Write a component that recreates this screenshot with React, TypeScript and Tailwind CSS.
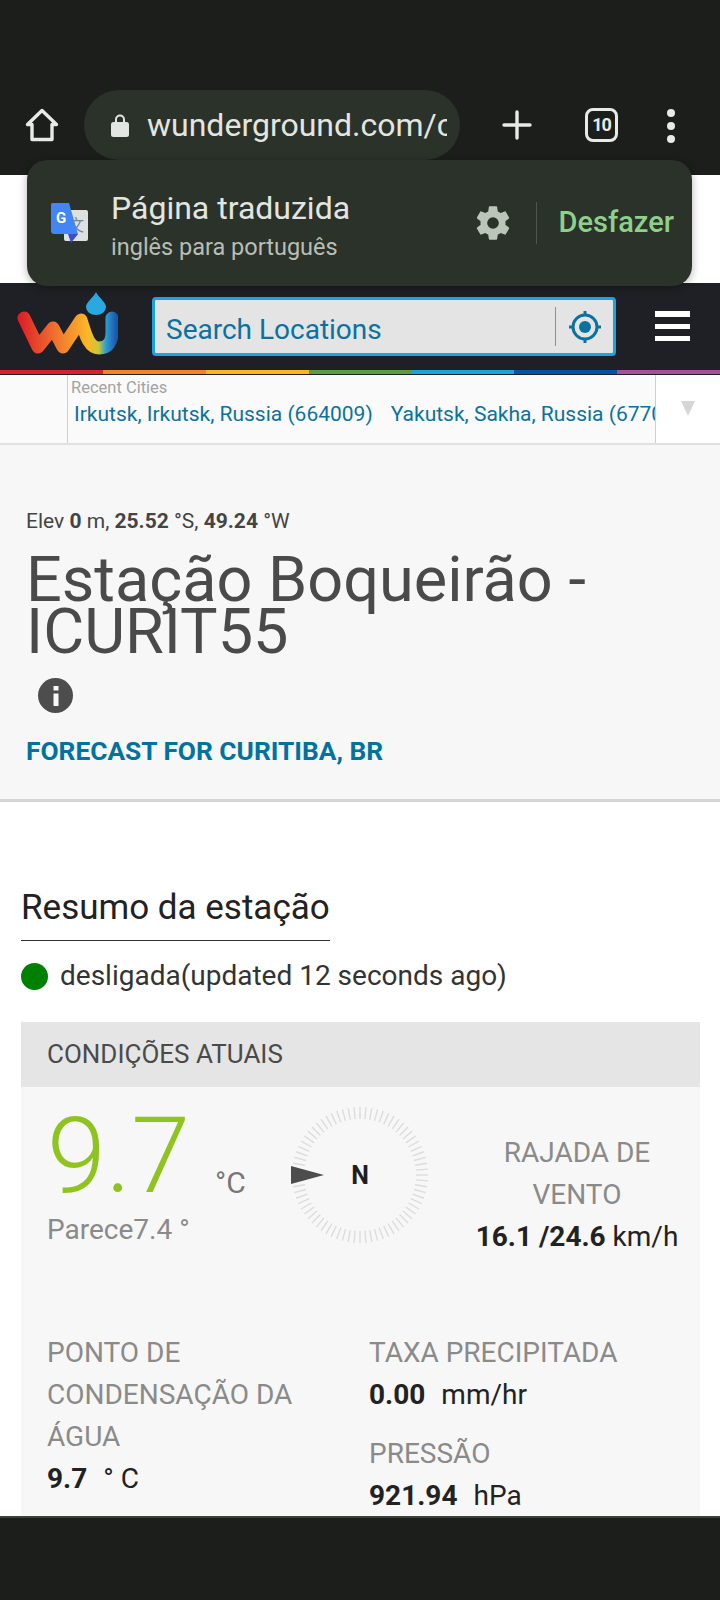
import React from 'react';

const rainbow = ['bg-[#d9202c]', 'bg-[#f58426]', 'bg-[#fdb522]', 'bg-[#5a9e3f]', 'bg-[#14a6dc]', 'bg-[#0353a8]', 'bg-[#a84f9c]'];

const ticks = Array.from({ length: 72 }, (_, i) => (i * 360) / 72);

const HomeIcon = () => (
  <svg width="36" height="36" viewBox="0 0 36 36" fill="none" stroke="#e8eae5" strokeWidth="3.4" strokeLinejoin="round">
    <path d="M18 3.5 3.5 17.5H8V32.5H28V17.5H32.5Z" />
  </svg>
);

const Logo = () => (
  <svg width="106" height="68" viewBox="0 0 106 68" className="shrink-0">
    <defs>
      <linearGradient id="wu" gradientUnits="userSpaceOnUse" x1="8" y1="0" x2="104" y2="0">
        <stop offset="0" stopColor="#dd2027" />
        <stop offset="0.38" stopColor="#f0742f" />
        <stop offset="0.7" stopColor="#fdb628" />
        <stop offset="0.82" stopColor="#c8c83a" />
        <stop offset="0.89" stopColor="#2f9fd0" />
        <stop offset="1" stopColor="#1a58ad" />
      </linearGradient>
    </defs>
    <path
      d="M12 26 26 55 41 36 51 55 69 28C73 40 76 56 87 56 96 56 100 50 100 40V26"
      fill="none"
      stroke="url(#wu)"
      strokeWidth="13"
      strokeLinecap="round"
      strokeLinejoin="round"
    />
    <path d="M84 0C87 6 94 10 94 15A10 8 0 0 1 74 15C74 10 81 6 84 0Z" fill="#29a9df" />
  </svg>
);

const TranslateIcon = () => (
  <svg width="38" height="40" viewBox="0 0 38 40">
    <rect x="14" y="7" width="24" height="31" rx="2" fill="#dfe1e0" />
    <text x="26" y="28" textAnchor="middle" fontSize="16" fill="#6f8797" fontFamily="'Noto Sans CJK SC', sans-serif">文</text>
    <path d="M2 0H19L28 31H4A3 3 0 0 1 1 28V1Z" fill="#4285f4" />
    <path d="M28 31 21 40 18 31Z" fill="#3a4fc4" />
    <text x="11" y="20" textAnchor="middle" fontSize="15" fontWeight="700" fill="#fff" fontFamily="Roboto, sans-serif">G</text>
  </svg>
);

const GearIcon = () => (
  <svg width="40" height="40" viewBox="0 0 24 24" fill="#bcc5ba">
    <path d="M19.430 12.980c.04-.32.07-.64.07-.98s-.03-.66-.07-.98l2.110-1.650c.19-.15.240-.42.120-.64l-2-3.460c-.12-.22-.39-.3-.61-.22l-2.490 1c-.52-.4-1.080-.73-1.690-.98l-.38-2.650A.49.49 0 0 0 14 2h-4c-.25 0-.46.18-.49.42l-.38 2.650c-.61.25-1.170.59-1.690.98l-2.490-1c-.23-.09-.49 0-.61.22l-2 3.460c-.13.22-.07.49.12.64l2.110 1.650c-.04.32-.07.65-.07.98s.03.66.07.98l-2.110 1.650c-.19.15-.24.42-.12.64l2 3.460c.12.22.39.3.61.22l2.490-1c.52.4 1.080.73 1.690.98l.38 2.650c.03.24.24.42.49.42h4c.25 0 .46-.18.49-.42l.38-2.650c.61-.25 1.170-.59 1.690-.98l2.490 1c.23.09.49 0 .61-.22l2-3.460c.12-.22.07-.49-.12-.64l-2.110-1.650zM12 15.500a3.500 3.500 0 1 1 0-7 3.500 3.500 0 0 1 0 7z" />
  </svg>
);

const Compass = () => (
  <svg width="140" height="140" viewBox="0 0 140 140" className="shrink-0">
    {ticks.map((a) => (
      <line key={a} x1="70" y1="2" x2="70" y2="14" stroke="#dcdcdc" strokeWidth="1.4" transform={`rotate(${a} 70 70)`} />
    ))}
    <path d="M1 61 34 70 1 79Z" fill="#4d4d4d" />
    <text x="70" y="79" textAnchor="middle" fontSize="25" fontWeight="700" fill="#1e1e1e" fontFamily="Roboto, sans-serif">N</text>
  </svg>
);

export default function App() {
  return (
    <div className="relative flex h-[1600px] w-[720px] flex-col overflow-hidden bg-white [font-family:Roboto,sans-serif]">
      {/* browser toolbar */}
      <div className="flex h-[175px] shrink-0 items-start bg-[#1b1e1b] pt-[90px]">
        <div className="ml-[24px] mt-[17px] w-[60px] shrink-0">
          <HomeIcon />
        </div>
        <div className="flex h-[70px] w-[376px] shrink-0 items-center rounded-full bg-[#2b322a] pl-[26px] pr-[13px]">
          <svg width="20" height="24" viewBox="0 0 20 24" className="shrink-0" fill="#e3e6e0">
            <path d="M5 10V6.500a5 5 0 0 1 10 0V10h-2V6.500a3 3 0 0 0-6 0V10Z" />
            <rect x="1" y="9" width="18" height="15" rx="2.500" />
          </svg>
          <span className="ml-[17px] overflow-hidden whitespace-nowrap text-[32px] leading-[70px] text-[#e3e6e0]">wunderground.com/c</span>
        </div>
        <svg width="32" height="32" viewBox="0 0 32 32" className="ml-[41px] mt-[19px] shrink-0" stroke="#e8eae5" strokeWidth="3.4" strokeLinecap="round">
          <path d="M16 3V29M3 16H29" />
        </svg>
        <div className="ml-[52px] mt-[18px] flex h-[34px] w-[33px] shrink-0 items-center justify-center rounded-[8px] border-[3px] border-[#e8eae5] text-[18px] font-bold leading-none tracking-[-1px] text-[#e8eae5]">
          10
        </div>
        <div className="ml-[49px] mt-[19px] flex shrink-0 flex-col gap-[5px]">
          <div className="h-[8px] w-[8px] rounded-full bg-[#e8eae5]" />
          <div className="h-[8px] w-[8px] rounded-full bg-[#e8eae5]" />
          <div className="h-[8px] w-[8px] rounded-full bg-[#e8eae5]" />
        </div>
      </div>

      {/* translation bubble */}
      <div className="absolute left-[27px] top-[160px] flex h-[126px] w-[665px] items-center rounded-[20px] bg-[#2b322a] shadow-[0_2px_8px_rgba(0,0,0,0.3)]">
        <div className="ml-[23px] shrink-0">
          <TranslateIcon />
        </div>
        <div className="ml-[23px] flex flex-col pt-[8px]">
          <span className="text-[32px] leading-[38px] text-[#e3e6e0]">Página traduzida</span>
          <span className="mt-[2px] text-[23.500px] leading-[36px] text-[#b9beb6]">inglês para português</span>
        </div>
        <div className="ml-auto shrink-0">
          <GearIcon />
        </div>
        <div className="ml-[23px] h-[42px] w-[1px] shrink-0 bg-[#4c544b]" />
        <span className="ml-[22px] mr-[18px] text-[29px] font-medium text-[#8ed08a]">Desfazer</span>
      </div>

      <div className="h-[108px] shrink-0 bg-white" />

      {/* site nav */}
      <div className="flex h-[87px] shrink-0 items-start bg-[#1f2025]">
        <div className="ml-[12px] mt-[9px] w-[140px] shrink-0">
          <Logo />
        </div>
        <div className="mt-[14px] flex h-[59px] w-[464px] shrink-0 items-center rounded-[4px] border-[3px] border-[#1ba5dc] bg-[#e4e4e4]">
          <span className="ml-[11px] flex-1 pt-[6px] text-[28px] text-[#0b729f]">Search Locations</span>
          <div className="h-[39px] w-[1px] bg-[#8f8f8f]" />
          <svg width="34" height="34" viewBox="0 0 34 34" className="ml-[12px] mr-[11px] shrink-0" fill="none" stroke="#0b729f">
            <circle cx="17" cy="17" r="12" strokeWidth="3" />
            <circle cx="17" cy="17" r="6" fill="#0b729f" strokeWidth="0" />
            <path d="M17 1V6M17 28V33M1 17H6M28 17H33" strokeWidth="3" />
          </svg>
        </div>
        <div className="ml-[39px] mt-[28px] flex w-[35px] shrink-0 flex-col gap-[7px]">
          <div className="h-[6px] bg-white" />
          <div className="h-[5px] bg-white" />
          <div className="h-[5px] bg-white" />
        </div>
      </div>
      <div className="flex h-[4px] shrink-0">
        {rainbow.map((c) => (
          <div key={c} className={`flex-1 ${c}`} />
        ))}
      </div>
      <div className="h-[1px] shrink-0 bg-[#1f2025]" />

      {/* recent cities */}
      <div className="flex h-[70px] shrink-0 border-b-2 border-[#e0e0e0] bg-[#fafafa]">
        <div className="w-[68px] shrink-0 border-r border-[#cfcfcf]" />
        <div className="min-w-0 flex-1 overflow-hidden pl-[3px] pt-[3px]">
          <div className="text-[16.500px] leading-[20px] text-[#a3a3a3]">Recent Cities</div>
          <div className="mt-[3px] flex gap-[18px] whitespace-nowrap pl-[3px] text-[21px] leading-[26px] text-[#0b729f]">
            <span>Irkutsk, Irkutsk, Russia (664009)</span>
            <span>Yakutsk, Sakha, Russia (677000)</span>
          </div>
        </div>
        <div className="flex w-[65px] shrink-0 justify-center border-l border-[#cfcfcf] bg-white pt-[26px]">
          <div className="h-0 w-0 border-x-[7px] border-t-[15px] border-x-transparent border-t-[#d6d6d6]" />
        </div>
      </div>

      {/* station header */}
      <div className="h-[357px] shrink-0 border-b-[3px] border-[#d5d5d5] bg-[#f7f7f7] pl-[26px] pt-[63px]">
        <div className="text-[21px] leading-[26px] text-[#444]">
          Elev <b>0</b> m, <b>25.52</b> °S, <b>49.24</b> °W
        </div>
        <h1 className="mt-[20px] w-[620px] text-[63px] font-normal leading-[52px] text-[#4a4a4a]">Estação Boqueirão - ICURIT55</h1>
        <div className="ml-[12px] mt-[20px] flex h-[35px] w-[35px] items-center justify-center rounded-full bg-[#4d4d4d]">
          <svg width="6" height="20" viewBox="0 0 6 20" fill="#f7f7f7">
            <rect x="0.500" y="0" width="5" height="4.500" />
            <rect x="0.500" y="7.500" width="5" height="12.500" />
          </svg>
        </div>
        <div className="mt-[22px] text-[26.300px] font-bold leading-[32px] text-[#00729f]">FORECAST FOR CURITIBA, BR</div>
      </div>

      {/* station summary */}
      <div className="min-h-0 flex-1 overflow-hidden bg-white px-[21px] pt-[86px]">
        <div className="w-[309px] border-b border-[#333] pb-[12px] text-[35px] leading-[40px] text-[#222]">Resumo da estação</div>
        <div className="mt-[17px] flex items-center">
          <div className="h-[27px] w-[27px] rounded-full bg-[#008000]" />
          <span className="ml-[12px] text-[28px] leading-[36px] text-[#333]">desligada(updated 12 seconds ago)</span>
        </div>
        <div className="mt-[28px] w-[679px] bg-[#f7f7f7] pb-[40px]">
          <div className="flex h-[65px] items-center bg-[#e5e5e5] pl-[26px] text-[26px] text-[#4a4a4a]">CONDIÇÕES ATUAIS</div>
          <div className="flex h-[245px] items-start">
            <div className="w-[239px] shrink-0 pl-[26px] pt-[13px]">
              <div className="flex items-end">
                <span className="text-[106px] font-light leading-[112px] text-[#8fc31f]">9.7</span>
                <span className="mb-[11px] ml-[25px] text-[30px] leading-[36px] text-[#777]">°C</span>
              </div>
              <div className="text-[28px] leading-[36px] text-[#8a8a8a]">Parece7.4 °</div>
            </div>
            <div className="ml-[30px] mt-[18px] shrink-0">
              <Compass />
            </div>
            <div className="ml-[27px] mt-[45px] flex w-[240px] shrink-0 flex-col items-center text-[28px] leading-[42px] text-[#8a8a8a]">
              <span>RAJADA DE</span>
              <span>VENTO</span>
              <span className="whitespace-nowrap text-[#222]">
                <b>16.1 /24.6</b> km/h
              </span>
            </div>
          </div>
          <div className="flex text-[28px] leading-[42px]">
            <div className="w-[348px] shrink-0 pl-[26px] text-[#8a8a8a]">
              PONTO DE<br />CONDENSAÇÃO DA<br />ÁGUA
              <div className="text-[#222]">
                <b>9.7</b>
                <span className="ml-[16px]">° C</span>
              </div>
            </div>
            <div className="flex-1">
              <div className="text-[#8a8a8a]">TAXA PRECIPITADA</div>
              <div className="text-[#222]">
                <b>0.00</b>
                <span className="ml-[16px]">mm/hr</span>
              </div>
              <div className="mt-[17px] text-[#8a8a8a]">PRESSÃO</div>
              <div className="text-[#222]">
                <b>921.94</b>
                <span className="ml-[16px]">hPa</span>
              </div>
            </div>
          </div>
        </div>
      </div>

      {/* bottom system bar */}
      <div className="h-[84px] shrink-0 border-t-2 border-[#3a4239] bg-[#1b1e1b]" />
    </div>
  );
}
